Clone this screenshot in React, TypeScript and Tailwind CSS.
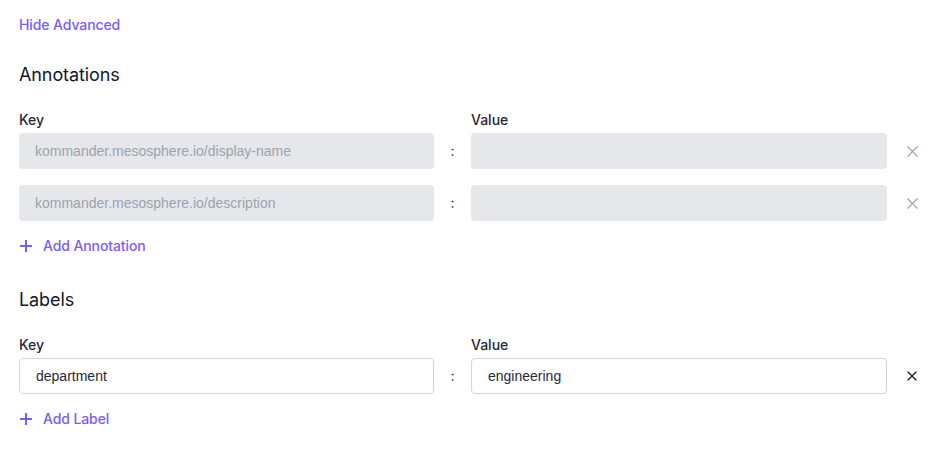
import React from 'react';
import { X } from 'lucide-react';

type Row = { key: string; value: string; placeholder?: boolean };

const annotations: Row[] = [
  { key: 'kommander.mesosphere.io/display-name', value: '', placeholder: true },
  { key: 'kommander.mesosphere.io/description', value: '', placeholder: true },
];

const labels: Row[] = [{ key: 'department', value: 'engineering' }];

const PlusIcon = () => (
  <svg width="12" height="12" viewBox="0 0 12 12" fill="none" stroke="currentColor" strokeWidth="2">
    <path d="M6 0v12M0 6h12" />
  </svg>
);

const KeyValueRow = ({ row }: { row: Row }) => {
  const disabled = !!row.placeholder;
  const inputClass = disabled
    ? "h-[36px] w-full rounded-[4px] bg-[#e5e7eb] px-4 font-['Liberation_Sans',Arial,sans-serif] text-sm text-[#1f2937] placeholder:text-[#9ca3af] outline-none"
    : "h-[36px] w-full rounded-[4px] border border-[#d1d5db] bg-white px-4 font-['Liberation_Sans',Arial,sans-serif] text-sm text-[#1f2937] outline-none";
  return (
    <div className="grid grid-cols-[415px_37px_416px_50px] items-center">
      <input
        className={inputClass}
        disabled={disabled}
        placeholder={disabled ? row.key : undefined}
        defaultValue={disabled ? '' : row.key}
      />
      <span className="text-center text-sm text-[#1f2937]">:</span>
      <input className={inputClass} disabled={disabled} defaultValue={row.value} />
      <button className="flex justify-center">
        {disabled ? (
          <X size={19} strokeWidth={1.4} className="text-[#9ca3af]" />
        ) : (
          <X size={16} strokeWidth={2} className="text-[#1f2937]" />
        )}
      </button>
    </div>
  );
};

const Section = ({ title, rows, addLabel }: { title: string; rows: Row[]; addLabel: string }) => (
  <div>
    <h2 className="text-lg leading-7 tracking-[-0.1px] text-[#111827]">{title}</h2>
    <div className="mt-[21px] grid grid-cols-[415px_37px_416px_50px] text-sm font-medium leading-5 text-[#1f2937]">
      <span>Key</span>
      <span />
      <span>Value</span>
      <span />
    </div>
    <div className="mt-[3px] space-y-4">
      {rows.map((r) => (
        <KeyValueRow key={r.key} row={r} />
      ))}
    </div>
    <button className="ml-px mt-[15px] flex items-center gap-[11px] text-sm font-medium leading-5 tracking-[-0.1px] text-[#7b5cf6]">
      <PlusIcon />
      {addLabel}
    </button>
  </div>
);

export default function App() {
  return (
    <div className="min-h-screen bg-white pl-[19px] pt-[12px] font-['Inter',sans-serif]">
      <button className="text-sm font-medium leading-5 tracking-[-0.1px] text-[#7b5cf6]">Hide Advanced</button>
      <div className="mt-[25px]">
        <Section title="Annotations" rows={annotations} addLabel="Add Annotation" />
      </div>
      <div className="mt-[30px]">
        <Section title="Labels" rows={labels} addLabel="Add Label" />
      </div>
    </div>
  );
}
